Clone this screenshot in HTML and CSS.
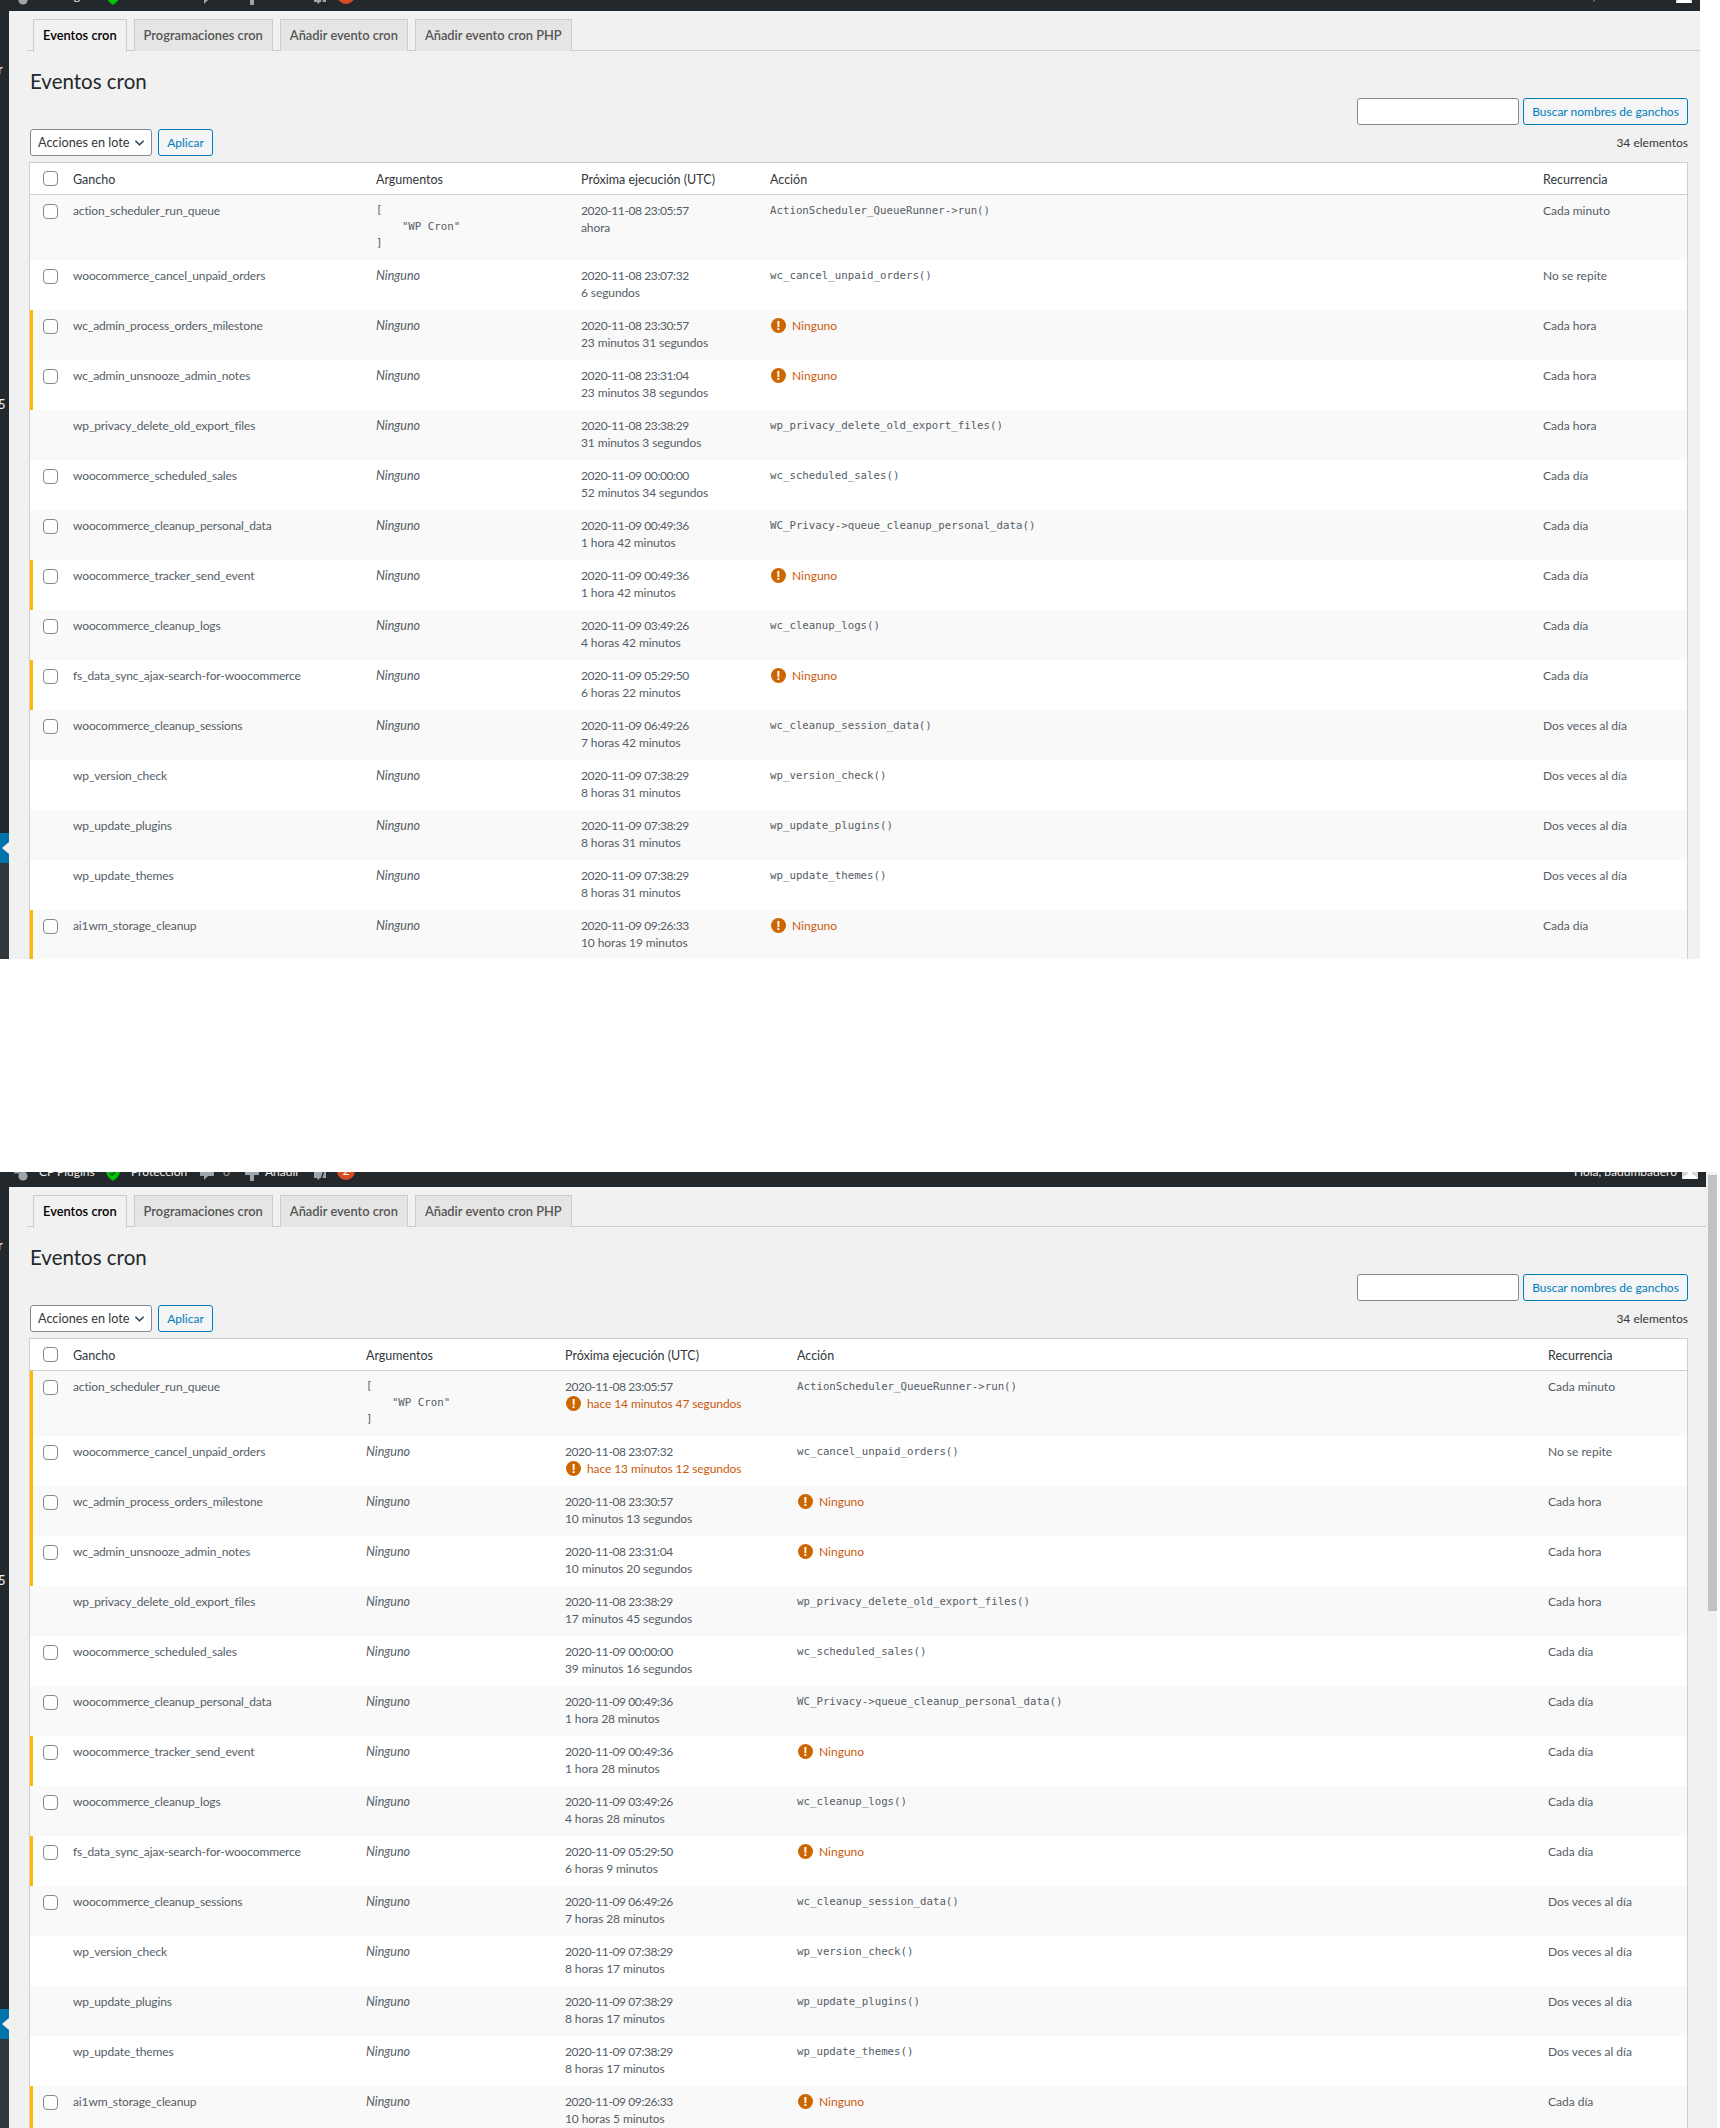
FILE: index.html
```html
<!DOCTYPE html>
<html lang="es">
<head>
<meta charset="utf-8">
<title>Eventos cron</title>
<link rel="stylesheet" href="styles.css">
</head>
<body>

<section class="shot shot-first">
  <div class="adminbar adminbar-short">
    <svg class="ab-icon ab-gear" viewBox="0 0 16 20"><circle cx="3" cy="10" r="2.6"/><circle cx="12" cy="8" r="2.6"/><circle cx="10" cy="15" r="4.6"/><path d="M3 10l7 5 2-7" fill="none" stroke="#a0a5aa" stroke-width="1.4"/></svg>
    <span class="ab-text ab-plugins">CP Plugins</span>
    <svg class="ab-icon ab-shield" viewBox="0 0 14 20"><path class="green" d="M0 6h14v5q-1 5-7 9-6-4-7-9z"/><path d="M4 12l2 2 4-4" fill="none" stroke="#14532d" stroke-width="1.6"/></svg>
    <span class="ab-text ab-protect">Protección</span>
    <svg class="ab-icon ab-bubble" viewBox="0 0 14 20"><path d="M1 6h12a1 1 0 0 1 1 1v7a1 1 0 0 1-1 1H8l-4 4v-4H1a1 1 0 0 1-1-1V7a1 1 0 0 1 1-1z"/></svg>
    <span class="ab-text ab-zero">0</span>
    <svg class="ab-icon ab-plus" viewBox="0 0 14 20"><path d="M5 4h4v6h5v4H9v6H5v-6H0v-4h5z"/></svg>
    <span class="ab-text ab-add">Añadir</span>
    <svg class="ab-icon ab-yoast" viewBox="0 0 16 20"><path d="M1 6h12v11H7l-2 2-1-2H1z"/><path d="M8 19l5-16" fill="none" stroke="#23282d" stroke-width="1.4"/></svg>
    <span class="ab-badge">2</span>
    <span class="ab-text ab-hello">Hola, badumbadero</span>
    <svg class="ab-avatar" viewBox="0 0 16 16"><rect width="16" height="16" fill="#d5d7d9"/><path d="M8 3c2 0 3 2 3 4s-1 3-1 4l5 3v2H1v-2l5-3c0-1-1-2-1-4s1-4 3-4z" fill="#fff"/></svg>
  </div>
  <div class="body-row">
    <aside class="sidebar">
      <span class="side-clip side-clip-r">r</span>
      <span class="side-clip side-clip-five">5</span>
      <div class="side-top"></div>
      <div class="collapse"><svg viewBox="0 0 7 12"><path d="M7 0v12L0 6z"/></svg></div>
      <div class="side-rest"></div>
    </aside>
    <main class="content">
      <nav class="tabs">
        <a class="tab tab-active">Eventos cron</a>
        <a class="tab">Programaciones cron</a>
        <a class="tab">Añadir evento cron</a>
        <a class="tab">Añadir evento cron PHP</a>
      </nav>
      <div class="wrap">
        <h1 class="title">Eventos cron</h1>
        <div class="searchbar">
          <input class="search-input" type="search" aria-label="Buscar">
          <button class="btn btn-search">Buscar nombres de ganchos</button>
        </div>
        <div class="tablenav">
          <div class="select">Acciones en lote<svg viewBox="0 0 12 8"><path d="M1.5 1.5L6 6l4.5-4.5" fill="none" stroke="#32373c" stroke-width="1.6"/></svg></div>
          <button class="btn btn-apply">Aplicar</button>
          <span class="count">34 elementos</span>
        </div>
        <table class="cron cron-a">
          <colgroup><col class="c-cb"><col class="c-hook"><col class="c-args"><col class="c-next"><col class="c-act"><col class="c-rec"></colgroup>
          <thead>
            <tr><th class="cb"><input class="check" type="checkbox"></th><th>Gancho</th><th>Argumentos</th><th>Próxima ejecución (UTC)</th><th>Acción</th><th>Recurrencia</th></tr>
          </thead>
          <tbody>
            <tr class="tall"><td class="cb"><input class="check" type="checkbox"></td><td>action_scheduler_run_queue</td><td><pre class="args">[
    "WP Cron"
]</pre></td><td>2020-11-08 23:05:57<br>ahora</td><td><code>ActionScheduler_QueueRunner-&gt;run()</code></td><td>Cada minuto</td></tr>
            <tr><td class="cb"><input class="check" type="checkbox"></td><td>woocommerce_cancel_unpaid_orders</td><td><em>Ninguno</em></td><td>2020-11-08 23:07:32<br>6 segundos</td><td><code>wc_cancel_unpaid_orders()</code></td><td>No se repite</td></tr>
            <tr class="warn"><td class="cb"><input class="check" type="checkbox"></td><td>wc_admin_process_orders_milestone</td><td><em>Ninguno</em></td><td>2020-11-08 23:30:57<br>23 minutos 31 segundos</td><td><span class="alert"><i class="bang">!</i>Ninguno</span></td><td>Cada hora</td></tr>
            <tr class="warn"><td class="cb"><input class="check" type="checkbox"></td><td>wc_admin_unsnooze_admin_notes</td><td><em>Ninguno</em></td><td>2020-11-08 23:31:04<br>23 minutos 38 segundos</td><td><span class="alert"><i class="bang">!</i>Ninguno</span></td><td>Cada hora</td></tr>
            <tr><td class="cb"></td><td>wp_privacy_delete_old_export_files</td><td><em>Ninguno</em></td><td>2020-11-08 23:38:29<br>31 minutos 3 segundos</td><td><code>wp_privacy_delete_old_export_files()</code></td><td>Cada hora</td></tr>
            <tr><td class="cb"><input class="check" type="checkbox"></td><td>woocommerce_scheduled_sales</td><td><em>Ninguno</em></td><td>2020-11-09 00:00:00<br>52 minutos 34 segundos</td><td><code>wc_scheduled_sales()</code></td><td>Cada día</td></tr>
            <tr><td class="cb"><input class="check" type="checkbox"></td><td>woocommerce_cleanup_personal_data</td><td><em>Ninguno</em></td><td>2020-11-09 00:49:36<br>1 hora 42 minutos</td><td><code>WC_Privacy-&gt;queue_cleanup_personal_data()</code></td><td>Cada día</td></tr>
            <tr class="warn"><td class="cb"><input class="check" type="checkbox"></td><td>woocommerce_tracker_send_event</td><td><em>Ninguno</em></td><td>2020-11-09 00:49:36<br>1 hora 42 minutos</td><td><span class="alert"><i class="bang">!</i>Ninguno</span></td><td>Cada día</td></tr>
            <tr><td class="cb"><input class="check" type="checkbox"></td><td>woocommerce_cleanup_logs</td><td><em>Ninguno</em></td><td>2020-11-09 03:49:26<br>4 horas 42 minutos</td><td><code>wc_cleanup_logs()</code></td><td>Cada día</td></tr>
            <tr class="warn"><td class="cb"><input class="check" type="checkbox"></td><td>fs_data_sync_ajax-search-for-woocommerce</td><td><em>Ninguno</em></td><td>2020-11-09 05:29:50<br>6 horas 22 minutos</td><td><span class="alert"><i class="bang">!</i>Ninguno</span></td><td>Cada día</td></tr>
            <tr><td class="cb"><input class="check" type="checkbox"></td><td>woocommerce_cleanup_sessions</td><td><em>Ninguno</em></td><td>2020-11-09 06:49:26<br>7 horas 42 minutos</td><td><code>wc_cleanup_session_data()</code></td><td>Dos veces al día</td></tr>
            <tr><td class="cb"></td><td>wp_version_check</td><td><em>Ninguno</em></td><td>2020-11-09 07:38:29<br>8 horas 31 minutos</td><td><code>wp_version_check()</code></td><td>Dos veces al día</td></tr>
            <tr><td class="cb"></td><td>wp_update_plugins</td><td><em>Ninguno</em></td><td>2020-11-09 07:38:29<br>8 horas 31 minutos</td><td><code>wp_update_plugins()</code></td><td>Dos veces al día</td></tr>
            <tr><td class="cb"></td><td>wp_update_themes</td><td><em>Ninguno</em></td><td>2020-11-09 07:38:29<br>8 horas 31 minutos</td><td><code>wp_update_themes()</code></td><td>Dos veces al día</td></tr>
            <tr class="warn"><td class="cb"><input class="check" type="checkbox"></td><td>ai1wm_storage_cleanup</td><td><em>Ninguno</em></td><td>2020-11-09 09:26:33<br>10 horas 19 minutos</td><td><span class="alert"><i class="bang">!</i>Ninguno</span></td><td>Cada día</td></tr>
          </tbody>
        </table>
      </div>
    </main>
  </div>
</section>

<section class="shot shot-second">
  <div class="window">
    <div class="adminbar adminbar-tall">
      <svg class="ab-icon ab-gear" viewBox="0 0 16 20"><circle cx="3" cy="10" r="2.6"/><circle cx="12" cy="8" r="2.6"/><circle cx="10" cy="15" r="4.6"/><path d="M3 10l7 5 2-7" fill="none" stroke="#a0a5aa" stroke-width="1.4"/></svg>
      <span class="ab-text ab-plugins">CP Plugins</span>
      <svg class="ab-icon ab-shield" viewBox="0 0 14 20"><path class="green" d="M0 6h14v5q-1 5-7 9-6-4-7-9z"/><path d="M4 12l2 2 4-4" fill="none" stroke="#14532d" stroke-width="1.6"/></svg>
      <span class="ab-text ab-protect">Protección</span>
      <svg class="ab-icon ab-bubble" viewBox="0 0 14 20"><path d="M1 6h12a1 1 0 0 1 1 1v7a1 1 0 0 1-1 1H8l-4 4v-4H1a1 1 0 0 1-1-1V7a1 1 0 0 1 1-1z"/></svg>
      <span class="ab-text ab-zero">0</span>
      <svg class="ab-icon ab-plus" viewBox="0 0 14 20"><path d="M5 4h4v6h5v4H9v6H5v-6H0v-4h5z"/></svg>
      <span class="ab-text ab-add">Añadir</span>
      <svg class="ab-icon ab-yoast" viewBox="0 0 16 20"><path d="M1 6h12v11H7l-2 2-1-2H1z"/><path d="M8 19l5-16" fill="none" stroke="#23282d" stroke-width="1.4"/></svg>
      <span class="ab-badge">2</span>
      <span class="ab-text ab-hello">Hola, badumbadero</span>
      <svg class="ab-avatar" viewBox="0 0 16 16"><rect width="16" height="16" fill="#d5d7d9"/><path d="M8 3c2 0 3 2 3 4s-1 3-1 4l5 3v2H1v-2l5-3c0-1-1-2-1-4s1-4 3-4z" fill="#fff"/></svg>
    </div>
    <div class="body-row">
      <aside class="sidebar">
        <span class="side-clip side-clip-r">r</span>
        <span class="side-clip side-clip-five">5</span>
        <div class="side-top"></div>
        <div class="collapse"><svg viewBox="0 0 7 12"><path d="M7 0v12L0 6z"/></svg></div>
        <div class="side-rest"></div>
      </aside>
      <main class="content">
        <nav class="tabs">
          <a class="tab tab-active">Eventos cron</a>
          <a class="tab">Programaciones cron</a>
          <a class="tab">Añadir evento cron</a>
          <a class="tab">Añadir evento cron PHP</a>
        </nav>
        <div class="wrap">
          <h1 class="title">Eventos cron</h1>
          <div class="searchbar">
            <input class="search-input" type="search" aria-label="Buscar">
            <button class="btn btn-search">Buscar nombres de ganchos</button>
          </div>
          <div class="tablenav">
            <div class="select">Acciones en lote<svg viewBox="0 0 12 8"><path d="M1.5 1.5L6 6l4.5-4.5" fill="none" stroke="#32373c" stroke-width="1.6"/></svg></div>
            <button class="btn btn-apply">Aplicar</button>
            <span class="count">34 elementos</span>
          </div>
          <table class="cron cron-b">
            <colgroup><col class="c-cb"><col class="c-hook"><col class="c-args"><col class="c-next"><col class="c-act"><col class="c-rec"></colgroup>
            <thead>
              <tr><th class="cb"><input class="check" type="checkbox"></th><th>Gancho</th><th>Argumentos</th><th>Próxima ejecución (UTC)</th><th>Acción</th><th>Recurrencia</th></tr>
            </thead>
            <tbody>
              <tr class="tall warn"><td class="cb"><input class="check" type="checkbox"></td><td>action_scheduler_run_queue</td><td><pre class="args">[
    "WP Cron"
]</pre></td><td>2020-11-08 23:05:57<br><span class="alert"><i class="bang">!</i>hace 14 minutos 47 segundos</span></td><td><code>ActionScheduler_QueueRunner-&gt;run()</code></td><td>Cada minuto</td></tr>
              <tr class="warn"><td class="cb"><input class="check" type="checkbox"></td><td>woocommerce_cancel_unpaid_orders</td><td><em>Ninguno</em></td><td>2020-11-08 23:07:32<br><span class="alert"><i class="bang">!</i>hace 13 minutos 12 segundos</span></td><td><code>wc_cancel_unpaid_orders()</code></td><td>No se repite</td></tr>
              <tr class="warn"><td class="cb"><input class="check" type="checkbox"></td><td>wc_admin_process_orders_milestone</td><td><em>Ninguno</em></td><td>2020-11-08 23:30:57<br>10 minutos 13 segundos</td><td><span class="alert"><i class="bang">!</i>Ninguno</span></td><td>Cada hora</td></tr>
              <tr class="warn"><td class="cb"><input class="check" type="checkbox"></td><td>wc_admin_unsnooze_admin_notes</td><td><em>Ninguno</em></td><td>2020-11-08 23:31:04<br>10 minutos 20 segundos</td><td><span class="alert"><i class="bang">!</i>Ninguno</span></td><td>Cada hora</td></tr>
              <tr><td class="cb"></td><td>wp_privacy_delete_old_export_files</td><td><em>Ninguno</em></td><td>2020-11-08 23:38:29<br>17 minutos 45 segundos</td><td><code>wp_privacy_delete_old_export_files()</code></td><td>Cada hora</td></tr>
              <tr><td class="cb"><input class="check" type="checkbox"></td><td>woocommerce_scheduled_sales</td><td><em>Ninguno</em></td><td>2020-11-09 00:00:00<br>39 minutos 16 segundos</td><td><code>wc_scheduled_sales()</code></td><td>Cada día</td></tr>
              <tr><td class="cb"><input class="check" type="checkbox"></td><td>woocommerce_cleanup_personal_data</td><td><em>Ninguno</em></td><td>2020-11-09 00:49:36<br>1 hora 28 minutos</td><td><code>WC_Privacy-&gt;queue_cleanup_personal_data()</code></td><td>Cada día</td></tr>
              <tr class="warn"><td class="cb"><input class="check" type="checkbox"></td><td>woocommerce_tracker_send_event</td><td><em>Ninguno</em></td><td>2020-11-09 00:49:36<br>1 hora 28 minutos</td><td><span class="alert"><i class="bang">!</i>Ninguno</span></td><td>Cada día</td></tr>
              <tr><td class="cb"><input class="check" type="checkbox"></td><td>woocommerce_cleanup_logs</td><td><em>Ninguno</em></td><td>2020-11-09 03:49:26<br>4 horas 28 minutos</td><td><code>wc_cleanup_logs()</code></td><td>Cada día</td></tr>
              <tr class="warn"><td class="cb"><input class="check" type="checkbox"></td><td>fs_data_sync_ajax-search-for-woocommerce</td><td><em>Ninguno</em></td><td>2020-11-09 05:29:50<br>6 horas 9 minutos</td><td><span class="alert"><i class="bang">!</i>Ninguno</span></td><td>Cada día</td></tr>
              <tr><td class="cb"><input class="check" type="checkbox"></td><td>woocommerce_cleanup_sessions</td><td><em>Ninguno</em></td><td>2020-11-09 06:49:26<br>7 horas 28 minutos</td><td><code>wc_cleanup_session_data()</code></td><td>Dos veces al día</td></tr>
              <tr><td class="cb"></td><td>wp_version_check</td><td><em>Ninguno</em></td><td>2020-11-09 07:38:29<br>8 horas 17 minutos</td><td><code>wp_version_check()</code></td><td>Dos veces al día</td></tr>
              <tr><td class="cb"></td><td>wp_update_plugins</td><td><em>Ninguno</em></td><td>2020-11-09 07:38:29<br>8 horas 17 minutos</td><td><code>wp_update_plugins()</code></td><td>Dos veces al día</td></tr>
              <tr><td class="cb"></td><td>wp_update_themes</td><td><em>Ninguno</em></td><td>2020-11-09 07:38:29<br>8 horas 17 minutos</td><td><code>wp_update_themes()</code></td><td>Dos veces al día</td></tr>
              <tr class="warn"><td class="cb"><input class="check" type="checkbox"></td><td>ai1wm_storage_cleanup</td><td><em>Ninguno</em></td><td>2020-11-09 09:26:33<br>10 horas 5 minutos</td><td><span class="alert"><i class="bang">!</i>Ninguno</span></td><td>Cada día</td></tr>
            </tbody>
          </table>
        </div>
      </main>
    </div>
  </div>
  <div class="scrollbar"><div class="thumb"></div></div>
</section>

</body>
</html>
```
FILE: styles.css
```css
html, body {
  margin: 0;
  padding: 0;
  background: #fff;
}
body {
  height: 2128px;
  overflow: hidden;
  font-family: Lato, "Open Sans", sans-serif;
  font-size: 12px;
  line-height: 17px;
  color: #555d66;
}

/* two stacked captures */
.shot {
  overflow: hidden;
  display: flex;
  flex-direction: column;
}
.shot-first {
  width: 1700px;
  height: 959px;
  margin-bottom: 213px;
}
.shot-second {
  width: 1717px;
  height: 956px;
  flex-direction: row;
}
.window {
  width: 1706px;
  display: flex;
  flex-direction: column;
}
.scrollbar {
  width: 9px;
  padding: 3px 0 0 2px;
  background: #f0f0f1;
}
.thumb {
  height: 436px;
  background: #c1c1c1;
}

/* admin bar: the top of it is cut off by the capture */
.adminbar {
  flex: none;
  display: flex;
  align-items: flex-end;
  overflow: hidden;
  background: #23282d;
  color: #eee;
  font-size: 12px;
}
.adminbar-short { height: 11px; }
.adminbar-tall { height: 15px; }
.ab-text {
  flex: none;
  line-height: 34px;
  height: 32px;
  white-space: nowrap;
}
.ab-icon {
  flex: none;
  height: 20px;
  margin-bottom: 6px;
  fill: #a0a5aa;
}
.ab-gear { width: 16px; margin-left: 13px; }
.ab-plugins { margin-left: 10px; width: 55px; }
.ab-shield { width: 14px; margin-left: 12px; }
.ab-shield .green { fill: #00c400; }
.ab-protect { margin-left: 11px; width: 58px; }
.ab-bubble { width: 14px; margin-left: 11px; }
.ab-zero { margin-left: 9px; width: 8px; color: #a0a5aa; }
.ab-plus { width: 14px; margin-left: 14px; }
.ab-add { margin-left: 6px; width: 36px; }
.ab-yoast { width: 16px; margin-left: 12px; }
.ab-badge {
  flex: none;
  width: 18px;
  height: 18px;
  margin: 0 0 7px 8px;
  border-radius: 50%;
  background: #d54e21;
  color: #fff;
  text-align: center;
  font-size: 12px;
  line-height: 18px;
}
.ab-hello { margin-left: auto; }
.ab-avatar {
  flex: none;
  width: 16px;
  height: 16px;
  margin: 0 8px 8px 5px;
}

/* left menu and page body */
.body-row {
  flex: 1;
  min-height: 0;
  display: flex;
}
.sidebar {
  flex: none;
  width: 9px;
  display: flex;
  flex-direction: column;
  overflow: hidden;
  background: #23282d;
}
.side-clip {
  height: 0;
  margin-left: -2px;
  color: #eee;
  font-size: 13px;
  line-height: 12px;
}
.side-clip-r { margin-top: 52px; }
.side-clip-five { margin-top: 335px; }
.side-top {
  flex: none;
  height: 435px;
}
.collapse {
  flex: none;
  height: 30px;
  display: flex;
  align-items: center;
  justify-content: flex-end;
  background: #0073aa;
}
.collapse svg {
  width: 7px;
  height: 12px;
  fill: #f1f1f1;
}
.side-rest {
  flex: 1;
  background: #32373c;
}
.content {
  flex: 1;
  min-width: 0;
  background: #f1f1f1;
}

/* tabs */
.tabs {
  display: flex;
  gap: 7px;
  height: 31px;
  margin: 8px 0 0 18px;
  padding-left: 6px;
  border-bottom: 1px solid #ccc;
}
.tab {
  height: 31px;
  padding: 0 9px;
  box-sizing: content-box;
  border: 1px solid #ccc;
  border-bottom: 0;
  background: #e5e5e5;
  color: #555;
  font-size: 12.85px;
  font-weight: 600;
  line-height: 31px;
  white-space: nowrap;
}
.tab-active {
  height: 32px;
  background: #f1f1f1;
  color: #000;
}

/* heading and controls */
.wrap {
  padding: 0 12px 0 20px;
}
.shot-second .wrap {
  padding-right: 18px;
}
.title {
  height: 47px;
  margin: 0 0 0 1px;
  color: #23282d;
  font-size: 20.5px;
  font-weight: 400;
  line-height: 60px;
}
.searchbar {
  display: flex;
  justify-content: flex-end;
  gap: 4px;
  height: 27px;
  margin-bottom: 4px;
}
.search-input {
  width: 162px;
  height: 27px;
  box-sizing: border-box;
  border: 1px solid #7e8993;
  border-radius: 3px;
  background: #fff;
}
.btn {
  height: 27px;
  box-sizing: border-box;
  padding: 1px 0 0;
  border: 1px solid #007cba;
  border-radius: 3px;
  background: #f3f5f6;
  color: #007cba;
  font: inherit;
  line-height: 24px;
}
.btn-search { width: 165px; }
.btn-apply { width: 55px; margin-left: 6px; }
.tablenav {
  display: flex;
  align-items: center;
  height: 27px;
  margin: 0 0 6px 1px;
}
.select {
  width: 122px;
  height: 27px;
  box-sizing: border-box;
  display: flex;
  align-items: center;
  justify-content: space-between;
  padding: 0 6px 0 7px;
  border: 1px solid #7e8993;
  border-radius: 3px;
  background: #fff;
  color: #32373c;
  font-size: 12.7px;
  line-height: 25px;
}
.select svg {
  width: 11px;
  height: 8px;
}
.count {
  margin-left: auto;
  color: #32373c;
}

/* table */
.cron {
  width: 1659px;
  table-layout: fixed;
  border-collapse: separate;
  border-spacing: 0;
  border: 1px solid #ccd0d4;
  background: #fff;
}
.c-cb { width: 33px; }
.cron-a .c-hook { width: 303px; }
.cron-a .c-args { width: 205px; }
.cron-a .c-next { width: 189px; }
.cron-a .c-act { width: 773px; }
.cron-a .c-rec { width: 154px; }
.cron-b .c-hook { width: 293px; }
.cron-b .c-args { width: 199px; }
.cron-b .c-next { width: 232px; }
.cron-b .c-act { width: 751px; }
.cron-b .c-rec { width: 149px; }
.cron th {
  height: 32px;
  box-sizing: border-box;
  padding: 2px 10px 0;
  border-bottom: 1px solid #ccd0d4;
  color: #32373c;
  font-size: 12.5px;
  font-weight: 400;
  text-align: left;
}
.cron td {
  height: 50px;
  box-sizing: border-box;
  padding: 7px 10px 8px;
  vertical-align: top;
  white-space: nowrap;
}
.cron tbody tr:nth-child(odd) { background: #f9f9f9; }
.cron tr.tall td { height: 65px; }
.cron .cb { padding: 0 0 0 13px; }
.cron td.cb { padding-top: 9px; }
.cron tr.warn td.cb { box-shadow: inset 3px 0 #ffb900; }
.cron td:nth-child(2) { letter-spacing: -0.13px; }
.cron td:nth-child(4) { letter-spacing: -0.1px; }
.cron td:nth-child(4)::first-line { letter-spacing: -0.4px; }
.check {
  appearance: none;
  display: block;
  width: 15px;
  height: 15px;
  box-sizing: border-box;
  margin: 0;
  border: 1px solid #7e8993;
  border-radius: 4px;
  background: #fff;
}
.cron em {
  font-size: 12.5px;
  font-style: italic;
}
.cron code,
.args {
  font-family: "DejaVu Sans Mono", monospace;
  font-size: 10.75px;
}
.cron code {
  display: block;
  margin-top: 1px;
  line-height: 15px;
}
.args {
  margin: 0;
  line-height: 16.6px;
}
.alert {
  display: inline-flex;
  align-items: center;
  color: #ca5a0c;
}
.bang {
  flex: none;
  width: 15px;
  height: 15px;
  margin: 0 6px 0 1px;
  border-radius: 50%;
  background: #c60;
  color: #fff;
  font-family: "Liberation Sans", sans-serif;
  font-size: 13px;
  font-style: normal;
  font-weight: 700;
  line-height: 15px;
  text-align: center;
}
```
